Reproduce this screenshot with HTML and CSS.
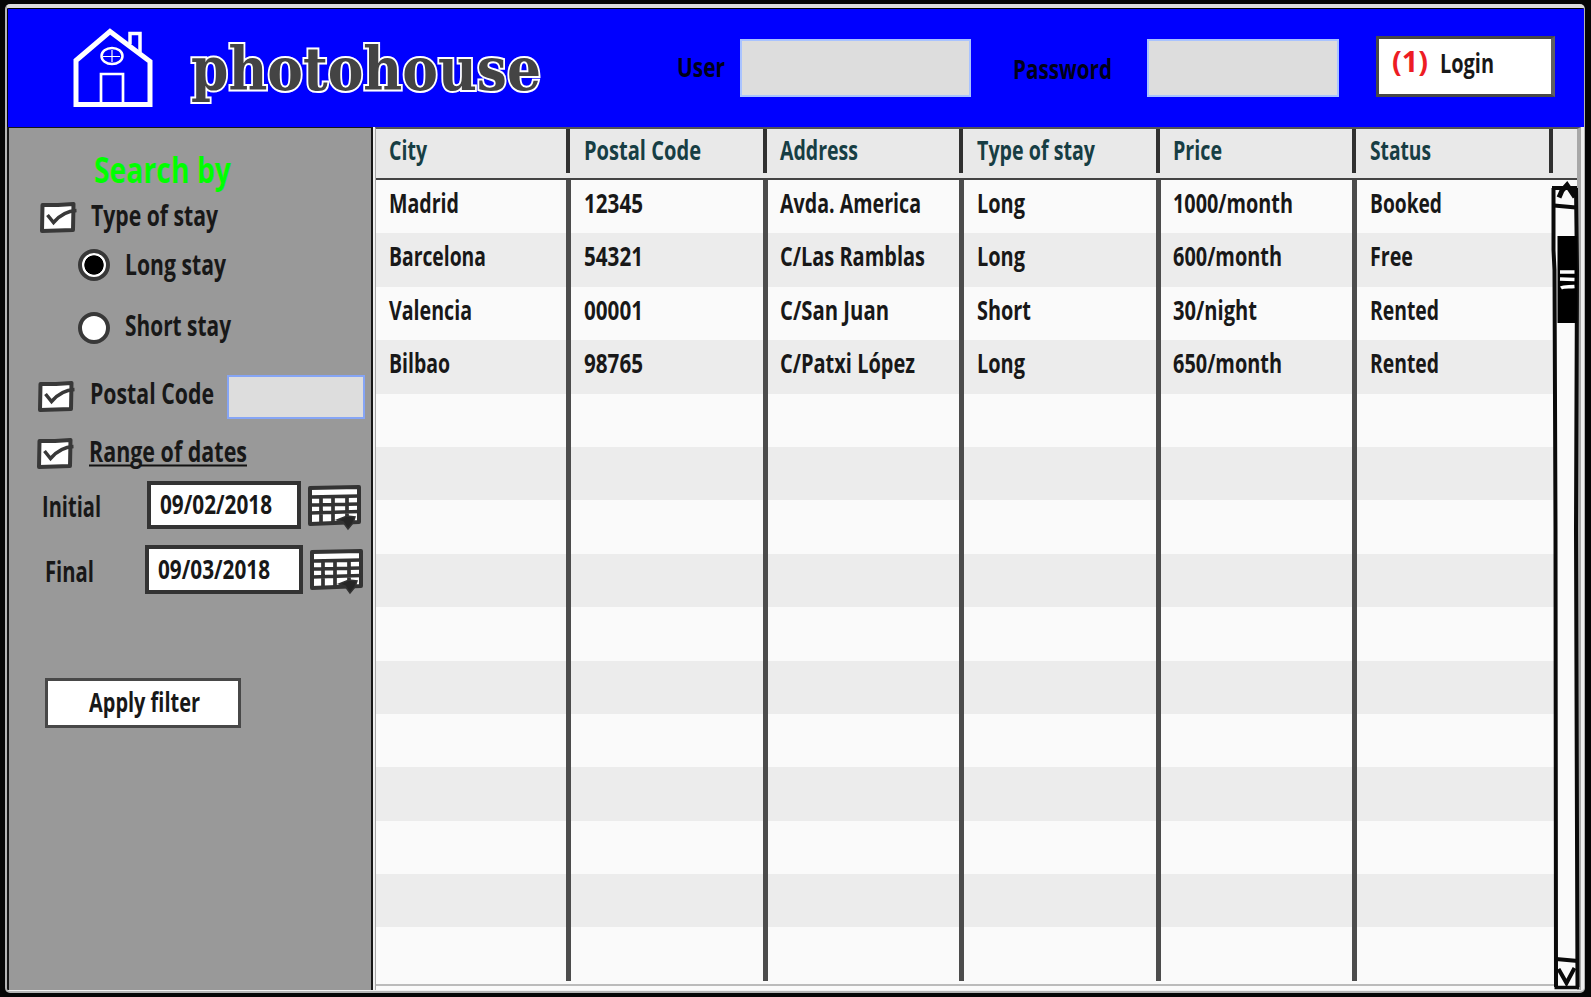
FILE: index.html
```html
<!DOCTYPE html>
<html lang="en">
<head>
<meta charset="utf-8">
<title>photohouse</title>
<link rel="stylesheet" href="styles.css">
</head>
<body>
<svg class="defs" width="0" height="0">
  <symbol id="check" viewBox="0 0 38 32">
    <path d="M2.5 3 L18 3 L33.500 2 L33 28 L2 29 Z" fill="#fff" stroke="#383838" stroke-width="4" stroke-linejoin="round"/>
    <path d="M7.500 13 L13.500 20.500 C19 14 26 9 36.500 8.500" fill="none" stroke="#383838" stroke-width="3.500"/>
  </symbol>
  <symbol id="calendar" viewBox="0 0 56 46">
    <path d="M3 3 L52 2 L52 37 L3 39 Z" fill="#fff" stroke="#333" stroke-width="4" stroke-linejoin="round"/>
    <path d="M3 12 L52 11 M3 20 L52 19 M3 28 L52 26.500 M14 12 V38 M26 12 V38 M40 12 V38" fill="none" stroke="#333" stroke-width="3.700"/>
    <path d="M30 35 L40 31 L48 32 L46 38 L41 44 L36 37 Z" fill="#262626" stroke="#333" stroke-width="1.500"/>
  </symbol>
</svg>
<main class="window">
  <header class="topbar">
    <svg class="house" width="84" height="84" viewBox="0 0 84 84" fill="none" stroke="#fff">
      <path d="M4 79 V32.500 L38 3.500 L78 33.500 V76.500 H3" stroke-width="5"/>
      <path d="M58 16 V5.500 H68 V24" stroke-width="3.500"/>
      <path d="M29 76 V46 H51 V76" stroke-width="2.700"/>
      <ellipse cx="40" cy="28" rx="10.500" ry="8" stroke-width="2.500"/>
      <path d="M31 28.500 H48 M40 22 V34" stroke-width="1.200"/>
    </svg>
    <svg class="brand" width="352" height="70"><text x="1" y="50" textLength="350" lengthAdjust="spacingAndGlyphs">photohouse</text></svg>
    <svg class="label user" width="48" height="40"><text y="30" textLength="48" lengthAdjust="spacingAndGlyphs">User</text></svg>
    <div class="field user-field"></div>
    <svg class="label password" width="98" height="40"><text y="31" textLength="99" lengthAdjust="spacingAndGlyphs">Password</text></svg>
    <div class="field password-field"></div>
    <div class="button login">
      <svg class="label mark" width="36" height="40"><text y="30" textLength="36" lengthAdjust="spacingAndGlyphs">(1)</text></svg>
      <svg class="label" width="53" height="40"><text y="31" textLength="54" lengthAdjust="spacingAndGlyphs">Login</text></svg>
    </div>
  </header>
  <div class="content">
    <aside class="sidebar">
      <svg class="label title" width="136" height="50"><text y="40" textLength="137" lengthAdjust="spacingAndGlyphs">Search by</text></svg>
      <div class="row type">
        <svg class="check" width="38" height="32"><use href="#check"/></svg>
        <svg class="label" width="127" height="40"><text y="31" textLength="127" lengthAdjust="spacingAndGlyphs">Type of stay</text></svg>
      </div>
      <div class="row long">
        <span class="radio on"></span>
        <svg class="label" width="101" height="40"><text y="31" textLength="101" lengthAdjust="spacingAndGlyphs">Long stay</text></svg>
      </div>
      <div class="row short">
        <span class="radio"></span>
        <svg class="label" width="106" height="40"><text y="31" textLength="106" lengthAdjust="spacingAndGlyphs">Short stay</text></svg>
      </div>
      <div class="row postal">
        <svg class="check" width="38" height="32"><use href="#check"/></svg>
        <svg class="label" width="124" height="40"><text y="31" textLength="124" lengthAdjust="spacingAndGlyphs">Postal Code</text></svg>
        <div class="field postal-field"></div>
      </div>
      <div class="row range">
        <svg class="check" width="38" height="32"><use href="#check"/></svg>
        <svg class="label" width="158" height="40"><text y="32" textLength="158" lengthAdjust="spacingAndGlyphs">Range of dates</text><path d="M0 35.500 H42 M52 35.500 H158" stroke="#111" stroke-width="2"/></svg>
      </div>
      <div class="row initial">
        <svg class="label" width="105" height="40"><text y="31" textLength="59" lengthAdjust="spacingAndGlyphs">Initial</text></svg>
        <div class="date"><svg class="label" width="111" height="40"><text y="29" textLength="112" lengthAdjust="spacingAndGlyphs">09/02/2018</text></svg></div>
        <svg class="calendar" width="56" height="46"><use href="#calendar"/></svg>
      </div>
      <div class="row final">
        <svg class="label" width="100" height="40"><text y="31" textLength="49" lengthAdjust="spacingAndGlyphs">Final</text></svg>
        <div class="date"><svg class="label" width="111" height="40"><text y="30" textLength="112" lengthAdjust="spacingAndGlyphs">09/03/2018</text></svg></div>
        <svg class="calendar" width="56" height="46"><use href="#calendar"/></svg>
      </div>
      <div class="button apply"><svg class="label" width="111" height="40"><text y="29" textLength="111" lengthAdjust="spacingAndGlyphs">Apply filter</text></svg></div>
    </aside>
    <section class="table">
      <div class="line head">
        <div><svg class="label" width="38" height="40"><text y="31" textLength="38" lengthAdjust="spacingAndGlyphs">City</text></svg></div>
        <div><svg class="label" width="117" height="40"><text y="31" textLength="117" lengthAdjust="spacingAndGlyphs">Postal Code</text></svg></div>
        <div><svg class="label" width="78" height="40"><text y="31" textLength="78" lengthAdjust="spacingAndGlyphs">Address</text></svg></div>
        <div><svg class="label" width="118" height="40"><text y="31" textLength="118" lengthAdjust="spacingAndGlyphs">Type of stay</text></svg></div>
        <div><svg class="label" width="49" height="40"><text y="31" textLength="49" lengthAdjust="spacingAndGlyphs">Price</text></svg></div>
        <div><svg class="label" width="61" height="40"><text y="31" textLength="61" lengthAdjust="spacingAndGlyphs">Status</text></svg></div>
      </div>
      <div class="body">
        <div class="line">
          <div><svg class="label" width="70" height="40"><text y="31" textLength="70" lengthAdjust="spacingAndGlyphs">Madrid</text></svg></div>
          <div><svg class="label" width="59" height="40"><text y="31" textLength="59" lengthAdjust="spacingAndGlyphs">12345</text></svg></div>
          <div><svg class="label" width="141" height="40"><text y="31" textLength="141" lengthAdjust="spacingAndGlyphs">Avda. America</text></svg></div>
          <div><svg class="label" width="48" height="40"><text y="31" textLength="48" lengthAdjust="spacingAndGlyphs">Long</text></svg></div>
          <div><svg class="label" width="120" height="40"><text y="31" textLength="120" lengthAdjust="spacingAndGlyphs">1000/month</text></svg></div>
          <div><svg class="label" width="72" height="40"><text y="31" textLength="72" lengthAdjust="spacingAndGlyphs">Booked</text></svg></div>
        </div>
        <div class="line">
          <div><svg class="label" width="96" height="40"><text y="31" textLength="97" lengthAdjust="spacingAndGlyphs">Barcelona</text></svg></div>
          <div><svg class="label" width="59" height="40"><text y="31" textLength="59" lengthAdjust="spacingAndGlyphs">54321</text></svg></div>
          <div><svg class="label" width="145" height="40"><text y="31" textLength="145" lengthAdjust="spacingAndGlyphs">C/Las Ramblas</text></svg></div>
          <div><svg class="label" width="48" height="40"><text y="31" textLength="48" lengthAdjust="spacingAndGlyphs">Long</text></svg></div>
          <div><svg class="label" width="109" height="40"><text y="31" textLength="109" lengthAdjust="spacingAndGlyphs">600/month</text></svg></div>
          <div><svg class="label" width="43" height="40"><text y="31" textLength="43" lengthAdjust="spacingAndGlyphs">Free</text></svg></div>
        </div>
        <div class="line">
          <div><svg class="label" width="83" height="40"><text y="31" textLength="83" lengthAdjust="spacingAndGlyphs">Valencia</text></svg></div>
          <div><svg class="label" width="59" height="40"><text y="31" textLength="59" lengthAdjust="spacingAndGlyphs">00001</text></svg></div>
          <div><svg class="label" width="109" height="40"><text y="31" textLength="109" lengthAdjust="spacingAndGlyphs">C/San Juan</text></svg></div>
          <div><svg class="label" width="54" height="40"><text y="31" textLength="54" lengthAdjust="spacingAndGlyphs">Short</text></svg></div>
          <div><svg class="label" width="84" height="40"><text y="31" textLength="84" lengthAdjust="spacingAndGlyphs">30/night</text></svg></div>
          <div><svg class="label" width="69" height="40"><text y="31" textLength="69" lengthAdjust="spacingAndGlyphs">Rented</text></svg></div>
        </div>
        <div class="line">
          <div><svg class="label" width="61" height="40"><text y="31" textLength="61" lengthAdjust="spacingAndGlyphs">Bilbao</text></svg></div>
          <div><svg class="label" width="59" height="40"><text y="31" textLength="59" lengthAdjust="spacingAndGlyphs">98765</text></svg></div>
          <div><svg class="label" width="135" height="40"><text y="31" textLength="135" lengthAdjust="spacingAndGlyphs">C/Patxi López</text></svg></div>
          <div><svg class="label" width="48" height="40"><text y="31" textLength="48" lengthAdjust="spacingAndGlyphs">Long</text></svg></div>
          <div><svg class="label" width="109" height="40"><text y="31" textLength="109" lengthAdjust="spacingAndGlyphs">650/month</text></svg></div>
          <div><svg class="label" width="69" height="40"><text y="31" textLength="69" lengthAdjust="spacingAndGlyphs">Rented</text></svg></div>
        </div>
        <div class="line"><div></div><div></div><div></div><div></div><div></div><div></div></div>
        <div class="line"><div></div><div></div><div></div><div></div><div></div><div></div></div>
        <div class="line"><div></div><div></div><div></div><div></div><div></div><div></div></div>
        <div class="line"><div></div><div></div><div></div><div></div><div></div><div></div></div>
        <div class="line"><div></div><div></div><div></div><div></div><div></div><div></div></div>
        <div class="line"><div></div><div></div><div></div><div></div><div></div><div></div></div>
        <div class="line"><div></div><div></div><div></div><div></div><div></div><div></div></div>
        <div class="line"><div></div><div></div><div></div><div></div><div></div><div></div></div>
        <div class="line"><div></div><div></div><div></div><div></div><div></div><div></div></div>
        <div class="line"><div></div><div></div><div></div><div></div><div></div><div></div></div>
        <div class="line"><div></div><div></div><div></div><div></div><div></div><div></div></div>
      </div>
      <svg class="scrollbar" width="30" height="810" viewBox="0 0 30 810" fill="none" stroke="#0a0a0a">
        <path d="M3 8 H26 L27 807 H5.500 L4.500 70 Z" fill="#fafafa" stroke="none"/>
        <path d="M3.500 8 V70 L4.500 90 L5.500 350 L6 807" stroke-width="4"/>
        <path d="M26 8 L27 90 L26 350 L27.500 807" stroke-width="4"/>
        <path d="M2 8 H27" stroke-width="4"/>
        <path d="M4 25.500 L26 27.500" stroke-width="4"/>
        <path d="M9 17.500 L12 10.500 L17 5 L25 17" stroke-width="5"/>
        <path d="M20 8 L27 19 V7 Z" fill="#0a0a0a" stroke="none"/>
        <path d="M7.500 56 H27 V143 H7.500 Z" fill="#000" stroke="none"/>
        <path d="M10 92 H24.500 M10 99 L24.500 99.500 M11 108 C14 106 18 107 24.500 106.500" stroke="#fff" stroke-width="3.500"/>
        <path d="M6 779 L28 781" stroke-width="4"/>
        <path d="M4.500 807.500 H29" stroke-width="3.500"/>
        <path d="M8.500 789 L16.500 803 L24.500 788" stroke-width="4"/>
      </svg>
    </section>
  </div>
</main>
</body>
</html>
```
FILE: styles.css
```css
* { box-sizing: border-box; }
body {
  margin: 0;
  width: 1591px;
  height: 997px;
  overflow: hidden;
  background: #060606;
  padding: 4px 0 0 5px;
}
svg { display: block; flex: none; }
.defs { position: absolute; }
.window {
  width: 1580px;
  height: 989px;
  border: solid #b4b4b4;
  border-width: 4px 1px 2px 2px;
  border-top-color: #dcdcdc;
  border-radius: 5px;
  background: #f0f0f0;
  overflow: hidden;
}
.label {
  overflow: visible;
  font-family: "Open Sans", "Noto Sans", sans-serif;
  font-size: 26px;
  font-weight: 700;
  fill: #181818;
}
.topbar {
  display: flex;
  align-items: flex-start;
  height: 119px;
  background: #00f;
  border-top: 1px solid #000;
  border-left: 1px solid #001;
}
.house { margin: 19px 0 0 64px; }
.brand {
  margin: 31px 0 0 34px;
  overflow: visible;
  font-family: "DejaVu Serif", serif;
  font-size: 60px;
  font-weight: 700;
  fill: #444;
  stroke: #fff;
  stroke-width: 4px;
  paint-order: stroke;
}
.user { margin: 38px 0 0 135px; fill: #000018; }
.password { margin: 39px 0 0 42px; fill: #000018; }
.field { flex: none; background: #ddd; border: 2px solid #a9c3ff; }
.user-field { width: 231px; height: 58px; margin: 30px 0 0 15px; }
.password-field { width: 192px; height: 58px; margin: 30px 0 0 36px; }
.button { display: flex; align-items: flex-start; background: #fff; border: 3px solid #484848; }
.login {
  width: 179px;
  height: 61px;
  margin: 27px 0 0 37px;
  padding: 3px 0 0 13px;
  gap: 12px;
  border-right-color: #606060;
  border-right-width: 4px;
}
.mark { fill: #ed1c24; font-size: 28px; }
.content { display: flex; height: 863px; }
.sidebar {
  display: flex;
  flex-direction: column;
  flex: none;
  width: 366px;
  padding-top: 15px;
  background: #999;
  border: solid #161616;
  border-width: 1px 2px 0 2px;
}
.sidebar .label { font-size: 28px; }
.sidebar .title { margin-left: 85px; font-size: 36px; font-weight: 700; fill: #0f0; }
.row { display: flex; align-items: flex-start; flex: none; height: 40px; }
.type { margin-top: 2px; padding-left: 31px; gap: 13px; }
.type .check { margin-top: 7px; }
.long { margin-top: 9px; padding-left: 69px; gap: 15px; }
.short { margin-top: 21px; padding-left: 69px; gap: 15px; }
.radio {
  flex: none;
  width: 32px;
  height: 32px;
  margin-top: 5px;
  border: 4px solid #383838;
  border-radius: 50%;
  background: #fff;
}
.radio.on { background: radial-gradient(circle, #000 9.3px, #fff 10px); }
.short .radio { margin-top: 7px; }
.postal { margin-top: 28px; padding-left: 29px; gap: 14px; }
.postal .check, .range .check { margin-top: 8px; }
.postal-field { width: 138px; height: 44px; margin: 2px 0 0 -1px; border-color: #86a5f5; }
.range { margin-top: 17px; padding-left: 28px; gap: 14px; }
.initial { margin-top: 11px; padding-left: 33px; height: 48px; }
.initial > .label { margin-top: 5px; }
.final { margin-top: 16px; padding-left: 36px; height: 49px; }
.final > .label { margin-top: 6px; }
.date {
  display: flex;
  align-items: flex-start;
  flex: none;
  width: 154px;
  height: 100%;
  padding-left: 9px;
  background: #fff;
  border: 4px solid #333;
}
.sidebar .date .label { font-size: 26px; }
.initial .calendar { margin: 4px 0 0 6px; }
.final .date { width: 158px; }
.final .calendar { margin: 4px 0 0 6px; }
.apply { flex: none; width: 196px; height: 50px; margin: 84px 0 0 36px; padding: 2px 0 0 41px; }
.sidebar .apply .label { font-size: 26px; }
.table {
  position: relative;
  flex: none;
  width: 1206px;
  margin-left: 2px;
  background: #fafafa;
  border: solid #a8a8a8;
  border-width: 2px 4px 0 1px;
  border-top-color: #555;
}
.line { display: grid; grid-template-columns: 195px 196.5px 196.5px 196.5px 196.500px 196.500px; height: 53.400px; }
.line > div { padding: 2px 0 0 12.500px; border-right: 5px solid #4c4c4c; }
.line > div:last-child { border-right: 0; }
.body .line:nth-child(even) { background: #ececec; }
.table .head { height: 51px; padding-bottom: 5px; background: #e9e9e9; border-bottom: 2px solid #444; }
.head > div, .head > div:last-child { margin-right: 1px; padding-top: 0; border-right: 4px solid #303030; }
.head .label { fill: #173e44; }
.body { padding-bottom: 3px; border-bottom: 2px solid #bbb; }
.scrollbar { position: absolute; left: 1174px; top: 51px; }
```
